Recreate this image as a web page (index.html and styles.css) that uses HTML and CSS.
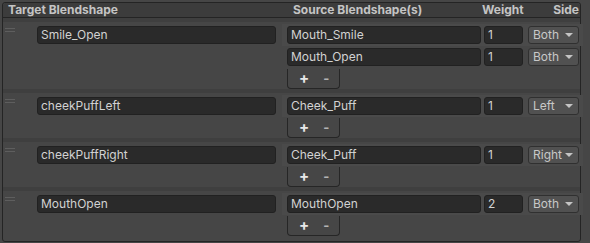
FILE: index.html
```html
<!DOCTYPE html>
<html lang="en">
    <head>
        <meta charset="UTF-8" />
        <title>Blendshape Mapping</title>
        <link rel="stylesheet" href="styles.css">
    </head>
    <body>
        <div class="panel">
            <!-- Column headers -->
            <div class="header">
                <span class="h-target">Target Blendshape</span>
                <span class="h-source">Source Blendshape(s)</span>
                <span class="h-weight">Weight</span>
                <span class="h-side">Side</span>
            </div>

            <!-- Smile_Open -->
            <div class="group">
                <div class="handle"></div>
                <div class="field target">Smile_Open</div>
                <div class="sources">
                    <div class="src-row first">
                        <div class="field source">Mouth_Smile</div>
                        <div class="field weight">1</div>
                        <div class="dropdown">Both<span class="arrow"></span></div>
                    </div>
                    <div class="src-row">
                        <div class="field source">Mouth_Open</div>
                        <div class="field weight">1</div>
                        <div class="dropdown">Both<span class="arrow"></span></div>
                    </div>
                    <div class="footer"><span class="plus">+</span><span class="minus">-</span></div>
                </div>
            </div>

            <!-- cheekPuffLeft -->
            <div class="group">
                <div class="handle"></div>
                <div class="field target">cheekPuffLeft</div>
                <div class="sources">
                    <div class="src-row first">
                        <div class="field source">Cheek_Puff</div>
                        <div class="field weight">1</div>
                        <div class="dropdown">Left<span class="arrow"></span></div>
                    </div>
                    <div class="footer"><span class="plus">+</span><span class="minus">-</span></div>
                </div>
            </div>

            <!-- cheekPuffRight -->
            <div class="group">
                <div class="handle"></div>
                <div class="field target">cheekPuffRight</div>
                <div class="sources">
                    <div class="src-row first">
                        <div class="field source">Cheek_Puff</div>
                        <div class="field weight">1</div>
                        <div class="dropdown">Right<span class="arrow"></span></div>
                    </div>
                    <div class="footer"><span class="plus">+</span><span class="minus">-</span></div>
                </div>
            </div>

            <!-- MouthOpen -->
            <div class="group">
                <div class="handle"></div>
                <div class="field target">MouthOpen</div>
                <div class="sources">
                    <div class="src-row first">
                        <div class="field source">MouthOpen</div>
                        <div class="field weight">2</div>
                        <div class="dropdown">Both<span class="arrow"></span></div>
                    </div>
                    <div class="footer"><span class="plus">+</span><span class="minus">-</span></div>
                </div>
            </div>
        </div>
    </body>
</html>
```

FILE: styles.css
```css
* {
    margin: 0;
    padding: 0;
    box-sizing: border-box;
}
body {
    background-color: #464646;
    font-family: Inter, "Noto Sans", sans-serif;
    font-size: 12px;
    color: #d2d2d2;
    width: 590px;
    height: 243px;
    overflow: hidden;
}
/* Outer list box */
.panel {
    margin: 2px 0 0 2px;
    width: 579px;
    height: 240px;
    border: 1px solid #242424;
    border-radius: 3px;
    background-color: #464646;
}
/* Header row */
.header {
    display: grid;
    grid-template-columns: 284px 195px 54px 1fr;
    height: 15px;
    line-height: 14px;
    background-color: #3c3c3c;
    border-bottom: 1px solid #242424;
    font-weight: 700;
    color: #c4c4c4;
    border-radius: 3px 3px 0 0;
}
.h-target {
    padding-left: 5px;
}
.h-source {
    padding-left: 6px;
}
.h-side {
    text-align: right;
    padding-right: 1px;
}
/* One target blendshape entry */
.group {
    display: grid;
    grid-template-columns: 28px 239px 1fr;
    column-gap: 6px;
    align-items: start;
    padding-top: 2px;
    border-top: 4px solid #3f3f3f;
}
.group:first-of-type {
    border-top: none;
    padding-top: 5px;
}
.handle {
    margin: 4px 0 0 2px;
    width: 10px;
    height: 4px;
    border-top: 1px solid #5e5e5e;
    border-bottom: 1px solid #5e5e5e;
}
.field {
    height: 18px;
    line-height: 16px;
    padding: 0 3px;
    background-color: #2a2a2a;
    border: 1px solid #212121;
    border-radius: 3px;
    white-space: nowrap;
    overflow: hidden;
}
.target {
    margin-top: 2px;
}
/* Source list */
.sources {
    display: flex;
    flex-direction: column;
    margin-right: -3px;
}
.src-row {
    display: flex;
    padding: 2px 3px 2px 5px;
}
.src-row.first {
    background-color: #4a4a4a;
}
.source {
    width: 194px;
}
.weight {
    width: 39px;
    margin-left: 3px;
}
.dropdown {
    position: relative;
    width: 51px;
    height: 18px;
    margin-left: 5px;
    line-height: 16px;
    padding-left: 4px;
    background-color: #515151;
    border: 1px solid #303030;
    border-radius: 3px;
    color: #c8c8c8;
}
.arrow {
    position: absolute;
    right: 5px;
    top: 6px;
    border-left: 4px solid transparent;
    border-right: 4px solid transparent;
    border-top: 4px solid #c4c4c4;
}
/* +/- footer tab under the source list */
.footer {
    display: flex;
    align-items: center;
    gap: 14px;
    margin: 1px 0 0 5px;
    width: 53px;
    height: 20px;
    padding: 0 0 2px 11px;
    border: 1px solid #262626;
    border-top: none;
    border-radius: 0 0 4px 4px;
    font-weight: 700;
    font-size: 15px;
}
.plus {
    color: #e8e8e8;
}
.minus {
    color: #b4b4b4;
    font-size: 13px;
}
```
